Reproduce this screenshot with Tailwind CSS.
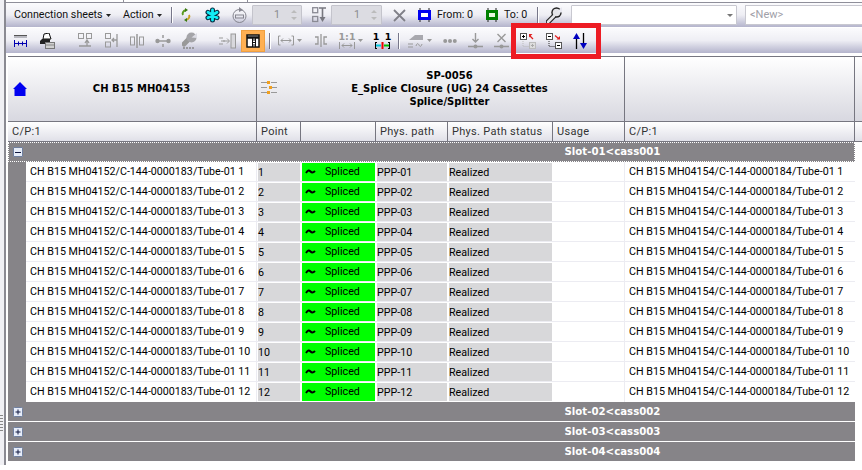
<!DOCTYPE html>
<html>
<head>
<meta charset="utf-8">
<script src="https://cdn.jsdelivr.net/npm/@tailwindcss/browser@4"></script>
</head>
<body class="m-0 bg-white">
<div class="relative flex w-[862px] h-[470px] overflow-hidden bg-white text-[10.700px] leading-[14px] text-black font-['Roboto','Noto_Sans',sans-serif]">
  <!-- window rail -->
  <div class="w-[6px] h-[465px] shrink-0 bg-[#f0f0f4] border-r-2 border-[#8a8a92]">
    <div class="mt-[415px] h-[18px] w-[3px] bg-[repeating-linear-gradient(#888_0_1px,transparent_1px_3px)]"></div>
  </div>

  <div class="flex-1 min-w-0 flex flex-col">
    <!-- top strip -->
    <div class="h-[3px] shrink-0 flex border-b border-[#8f8f9a] bg-white">
      <div class="w-[118px] border-r border-[#8f8f9a]"></div>
      <div class="w-[124px] border-r border-[#8f8f9a]"></div>
    </div>

    <!-- toolbar 1 -->
    <div class="h-[24px] shrink-0 flex items-center bg-gradient-to-b from-[#fbfbfd] via-[#eeeef4] to-[#b4b4cc] text-[10.700px] text-[#111]">
      <span class="ml-[8px] w-[88px] whitespace-nowrap">Connection sheets</span>
      <svg class="ml-[4px] w-[5px] h-[3px]" viewBox="0 0 5 3"><path d="M0 0h5L2.500 3z" fill="#222"/></svg>
      <span class="ml-[12px] w-[29px] whitespace-nowrap">Action</span>
      <svg class="ml-[5px] w-[5px] h-[3px]" viewBox="0 0 5 3"><path d="M0 0h5L2.500 3z" fill="#222"/></svg>
      <div class="ml-[9px] w-[2px] h-[16px] bg-[#77778a] border-r border-white"></div>
      <!-- refresh -->
      <svg class="ml-[8px] w-[10px] h-[14px]" viewBox="0 0 10 14"><path d="M5 2C2 3 1 5 2 7" fill="none" stroke="#5a9a20" stroke-width="2"/><path d="M4 0l3 2-3 2z" fill="#3a7a10"/><path d="M5 12c3-1 4-3 3-5" fill="none" stroke="#c8a020" stroke-width="2"/><path d="M6 14l-3-2 3-2z" fill="#3a7a10"/></svg>
      <!-- snowflake -->
      <svg class="ml-[14px] w-[15px] h-[16px]" viewBox="0 0 15 16"><g stroke="#062a40" stroke-width="5" stroke-linecap="round"><path d="M7.500 3v10M3 5.300l9 5.400M12 5.300l-9 5.400"/></g><g stroke="#12ecf4" stroke-width="2.800" stroke-linecap="round"><path d="M7.500 3v10M3 5.300l9 5.400M12 5.300l-9 5.400"/></g></svg>
      <!-- disabled circular -->
      <svg class="ml-[12px] w-[15px] h-[18px]" viewBox="0 0 15 18"><circle cx="7.500" cy="10" r="6.500" fill="none" stroke="#85858f"/><rect x="3.500" y="9" width="8" height="3" fill="none" stroke="#85858f"/><path d="M7 1l4 3-4 2z" fill="#85858f"/></svg>
      <!-- spinner -->
      <div class="ml-[5px] w-[50px] h-[20px] flex items-center justify-end bg-[#dcdce2] border border-[#c4c4cc] text-[#8a8a90] rounded-[1px]">
        <span class="mr-[10px]">1</span>
        <svg class="mr-[3px] w-[8px] h-[14px]" viewBox="0 0 8 14"><path d="M1 5l3-3 3 3zM1 9l3 3 3-3z" fill="#bbb"/></svg>
      </div>
      <!-- disabled stack -->
      <svg class="ml-[10px] w-[14px] h-[16px]" viewBox="0 0 14 16"><g fill="none" stroke="#8a8a94" stroke-width="1.300"><rect x=".7" y=".7" width="5" height="5"/><rect x=".7" y="9.500" width="5" height="5"/></g><path d="M7 1h7M10.500 1v10" stroke="#77777f" stroke-width="1.600"/><path d="M7.500 10h6l-3 5z" fill="#77777f"/></svg>
      <div class="ml-[5px] w-[51px] h-[20px] flex items-center justify-end bg-[#dcdce2] border border-[#c4c4cc] text-[#8a8a90] rounded-[1px]">
        <span class="mr-[10px]">1</span>
        <svg class="mr-[3px] w-[8px] h-[14px]" viewBox="0 0 8 14"><path d="M1 5l3-3 3 3zM1 9l3 3 3-3z" fill="#bbb"/></svg>
      </div>
      <!-- X -->
      <svg class="ml-[11px] w-[13px] h-[13px]" viewBox="0 0 13 13"><path d="M1 1l11 11M12 1L1 12" stroke="#808088" stroke-width="1.800"/></svg>
      <!-- from -->
      <svg class="ml-[12px] w-[13px] h-[14px]" viewBox="0 0 13 14"><rect x="0" y="2" width="13" height="10" fill="#0000f0"/><rect x="3" y="5" width="7" height="4" fill="#fff"/><path d="M2 0v2M11 0v2M2 12v2M11 12v2" stroke="#222"/></svg>
      <span class="ml-[6px] w-[36px] whitespace-nowrap">From: 0</span>
      <svg class="ml-[13px] w-[12px] h-[14px]" viewBox="0 0 12 14"><rect x="0" y="2" width="12" height="10" fill="#008000"/><rect x="3" y="5" width="6" height="4" fill="#e8f8e0"/><path d="M2 0v2M10 0v2M2 12v2M10 12v2" stroke="#222"/></svg>
      <span class="ml-[6px] w-[24px] whitespace-nowrap">To: 0</span>
      <div class="ml-[9px] w-[2px] h-[16px] bg-[#77778a] border-r border-white"></div>
      <!-- wrench -->
      <svg class="ml-[7px] w-[16px] h-[17px]" viewBox="0 0 16 17"><path d="M2 15l6-6" stroke="#222" stroke-width="5" stroke-linecap="round"/><circle cx="10.500" cy="5.500" r="5.200" fill="#222"/><path d="M2 15l6-6" stroke="#e4e4e8" stroke-width="2.600" stroke-linecap="round"/><circle cx="10.500" cy="5.500" r="3.800" fill="#e4e4e8"/><path d="M10.500 5.500L16 0v5.500z" fill="#e8e8f0"/></svg>
      <!-- combo -->
      <div class="ml-[9px] w-[166px] h-[20px] flex items-center justify-end bg-white border border-[#c8c8d0] rounded-[1px]">
        <svg class="mr-[3px] w-[6px] h-[3px]" viewBox="0 0 6 3"><path d="M0 0h6L3 3z" fill="#777"/></svg>
      </div>
      <div class="ml-[8px] flex-1 h-[20px] flex items-center bg-white border border-r-0 border-[#c8c8d0] pl-[4px] text-[#a0a0a8] text-[11px]">&lt;New&gt;</div>
    </div>

    <!-- toolbar 2 -->
    <div class="h-[26px] shrink-0 flex items-center border-t border-white bg-gradient-to-b from-[#fbfbfd] via-[#eeeef4] to-[#b4b4cc]">
      <svg class="ml-[8px] w-[13px] h-[12px]" viewBox="0 0 13 12"><rect y="0" width="13" height="3" fill="#b8b8c0"/><path d="M0 .5h13" stroke="#555"/><path d="M.5 5v7M12.500 5v7M1 8.500h11M4.500 6.500v4M8.500 6.500v4" stroke="#0000b0"/></svg>
      <svg class="ml-[12px] w-[16px] h-[16px]" viewBox="0 0 16 16"><path d="M5 1l5-1 2 6H4z" fill="#fff" stroke="#111"/><path d="M1 8l2-2h8v5H1z" fill="#222"/><rect x="6.500" y="9.500" width="9" height="6" fill="#d0d0d0" stroke="#777"/><path d="M7 12h8" stroke="#888"/></svg>
      <svg class="ml-[23px] w-[15px] h-[15px]" viewBox="0 0 15 15"><g fill="none" stroke="#999"><rect x=".5" y=".5" width="5" height="5"/><rect x="8.500" y=".5" width="5" height="5"/></g><path d="M1 13h12M9 13V8M7 10l2-3 2 3" fill="none" stroke="#999" stroke-width="1.300"/></svg>
      <svg class="ml-[12px] w-[13px] h-[15px]" viewBox="0 0 13 15"><g fill="none" stroke="#999"><rect x=".5" y=".5" width="5" height="5"/><rect x=".5" y="9" width="5" height="5"/></g><path d="M12 1v13M12 7H7M9 5L7 7l2 2" fill="none" stroke="#999" stroke-width="1.300"/></svg>
      <svg class="ml-[12px] w-[14px] h-[14px]" viewBox="0 0 14 14"><g fill="none" stroke="#999"><rect x=".5" y="3" width="4" height="8"/><rect x="9.500" y="3" width="4" height="8"/></g><path d="M7 0v14" stroke="#999" stroke-width="1.500"/></svg>
      <svg class="ml-[11px] w-[16px] h-[12px]" viewBox="0 0 16 12"><circle cx="2.500" cy="6" r="2.200" fill="#999"/><circle cx="13.500" cy="6" r="2.200" fill="#999"/><path d="M8 0v3M8 9v3M4 6h8" stroke="#999" stroke-width="1.500"/></svg>
      <svg class="ml-[11px] w-[15px] h-[17px]" viewBox="0 0 15 17"><path d="M2 12l4-4" stroke="#999" stroke-width="5" stroke-linecap="round"/><circle cx="9.500" cy="5.500" r="5" fill="#a4a4a8"/><path d="M9.500 5.500L15 1v5z" fill="#dcdce4"/><path d="M1 16h12" stroke="#888" stroke-width="1.500" stroke-dasharray="2 1"/></svg>
      <svg class="ml-[22px] w-[17px] h-[16px]" viewBox="0 0 17 16"><path d="M0 5h4M2 8h4M0 11h4" stroke="#999"/><path d="M4 8h6M8 5.500L10.500 8 8 10.500" fill="none" stroke="#999"/><rect x="12" y="1" width="4.500" height="14" fill="#d8d8dc" stroke="#999"/></svg>
      <!-- active -->
      <div class="ml-[5px] w-[24px] h-[22px] flex items-center justify-center bg-[#ffb053] border border-[#f0a040]">
        <svg class="w-[14px] h-[14px]" viewBox="0 0 14 14"><rect x="1" y="1" width="12" height="12" fill="#fff" stroke="#111" stroke-width="1.500"/><path d="M1 3.500h12" stroke="#111" stroke-width="2.500"/><path d="M6.500 3v10M9.500 3v10" stroke="#111"/><path d="M7 6h2M7 8.500h2M7 11h2" stroke="#111"/></svg>
      </div>
      <div class="ml-[4px] w-[2px] h-[16px] bg-[#77778a] border-r border-white"></div>
      <svg class="ml-[7px] w-[16px] h-[11px]" viewBox="0 0 16 11"><path d="M.5 1v9M15.500 1v9M.5 1h2M.5 10h2M15.500 1h-2M15.500 10h-2M3 5.500h10M5 3.500l-2 2 2 2M11 3.500l2 2-2 2" fill="none" stroke="#999"/></svg>
      <svg class="ml-[3px] w-[5px] h-[3px]" viewBox="0 0 5 3"><path d="M0 0h5L2.500 3z" fill="#999"/></svg>
      <svg class="ml-[12px] w-[14px] h-[13px]" viewBox="0 0 14 13"><path d="M7 0v13M1 3h3v7H1M13 3h-3v7h3" fill="none" stroke="#999" stroke-width="1.300"/></svg>
      <div class="ml-[11px] flex flex-col items-center w-[16px]">
        <span class="text-[9.500px] leading-[9px] font-bold text-[#999] whitespace-nowrap font-['DejaVu_Sans',sans-serif]">1:1</span>
        <svg class="mt-[1px] w-[16px] h-[7px]" viewBox="0 0 16 7"><path d="M.5 0v7M15.500 0v7M3 3.500h10M5 1.500l-2 2 2 2M11 1.500l2 2-2 2" fill="none" stroke="#999"/></svg>
      </div>
      <svg class="ml-[3px] w-[5px] h-[3px]" viewBox="0 0 5 3"><path d="M0 0h5L2.500 3z" fill="#999"/></svg>
      <div class="ml-[12px] flex flex-col items-center w-[15px]">
        <span class="text-[9.500px] leading-[9px] font-bold text-black whitespace-nowrap tracking-[1px] font-['DejaVu_Sans',sans-serif]">1 1</span>
        <svg class="mt-[1px] w-[15px] h-[7px]" viewBox="0 0 15 7"><path d="M.5 0v7M14.500 0v7M0 .5h2M0 6.500h2M13 .5h2M13 6.500h2" stroke="#000"/><path d="M1 3.500h5" stroke="#00c8e0" stroke-width="2"/><path d="M9 3.500h5" stroke="#00c000" stroke-width="2"/><path d="M7.500 0v7" stroke="#f00000" stroke-width="2"/></svg>
      </div>
      <div class="ml-[8px] w-[2px] h-[16px] bg-[#77778a] border-r border-white"></div>
      <svg class="ml-[7px] w-[16px] h-[15px]" viewBox="0 0 16 15"><path d="M2 7l6-5h8v5z" fill="#a8a8ae"/><path d="M1 11h5M1 14h5M9 13c1-3 2-3 3-1s2 2 3-1" fill="none" stroke="#999"/></svg>
      <svg class="ml-[4px] w-[5px] h-[3px]" viewBox="0 0 5 3"><path d="M0 0h5L2.500 3z" fill="#999"/></svg>
      <svg class="ml-[11px] w-[14px] h-[6px]" viewBox="0 0 14 6"><circle cx="2.200" cy="3" r="2" fill="#999"/><circle cx="11.800" cy="3" r="2" fill="#999"/><circle cx="7" cy="3" r="2" fill="#999"/></svg>
      <svg class="ml-[11px] w-[15px] h-[16px]" viewBox="0 0 15 16"><path d="M7.500 0v9M4.500 6l3 3 3-3M0 13.500h15" fill="none" stroke="#999" stroke-width="1.400"/><circle cx="7.500" cy="13.500" r="2" fill="#999"/></svg>
      <svg class="ml-[11px] w-[15px] h-[16px]" viewBox="0 0 15 16"><path d="M3.500 1l8 8M11.500 1l-8 8M0 13.500h15" fill="none" stroke="#999" stroke-width="1.400"/><circle cx="7.500" cy="13.500" r="2" fill="#999"/></svg>
      <!-- expand -->
      <svg class="ml-[11px] w-[16px] h-[16px]" viewBox="0 0 16 16"><rect x=".5" y=".5" width="6" height="6" fill="#fff" stroke="#555"/><path d="M2 3.500h3M3.500 2v3" stroke="#000"/><path d="M13 6L9.500 2.500" stroke="#e02020" stroke-width="1.200"/><path d="M9 1h3.500L9 4.500z" fill="#e02020"/><path d="M3 8v5.500h6" fill="none" stroke="#bbb" stroke-dasharray="1 1"/><rect x="9.500" y="9.500" width="6" height="6" fill="#ddd" stroke="#bbb"/><path d="M11 12.500h3M12.500 11v3" stroke="#aaa"/></svg>
      <svg class="ml-[10px] w-[16px] h-[16px]" viewBox="0 0 16 16"><rect x=".5" y=".5" width="6" height="6" fill="#fff" stroke="#555"/><path d="M2 3.500h3" stroke="#000"/><path d="M9 2.500l3.500 3" stroke="#e02020" stroke-width="1.200"/><path d="M14 3v3.500h-3.500z" fill="#e02020"/><path d="M3 8v5.500h6" fill="none" stroke="#333" stroke-dasharray="1 1"/><rect x="9.500" y="9.500" width="6" height="6" fill="#fff" stroke="#555"/><path d="M11 12.500h3" stroke="#000"/></svg>
      <svg class="ml-[11px] w-[14px] h-[16px]" viewBox="0 0 14 16"><path d="M3.500 16V4" stroke="#000" stroke-width="1.300"/><path d="M3.500 0L7 6H0z" fill="#0000c0"/><path d="M10.500 0v12" stroke="#000" stroke-width="1.300"/><path d="M10.500 16L14 10H7z" fill="#0000c0"/></svg>
    </div>

    <!-- gap -->
    <div class="h-[3px] shrink-0 bg-white"></div>

    <!-- table -->
    <div class="ml-[2px] w-[854px] shrink-0 border-t border-[#767680]">
      <!-- machine header -->
      <div class="h-[65px] grid grid-cols-[249px_368px_230px_7px] border-b border-[#767680] bg-gradient-to-b from-white to-[#d8d8e0] font-bold font-['DejaVu_Sans',sans-serif] text-[10px] leading-[13px]">
        <div class="flex items-center border-r border-[#767680] pl-[5px] pb-[2px]">
          <svg class="w-[14px] h-[14px] shrink-0 mt-[2px]" viewBox="0 0 14 14"><path d="M7 0l7 7h-1.500v7h-11V7H0z" fill="#0000f0"/></svg>
          <span class="flex-1 text-center">CH B15 MH04153</span>
        </div>
        <div class="relative flex items-center justify-center text-center border-r border-[#767680] pl-[18px] pb-[2px]">
          <svg class="absolute left-[4px] top-[24px] w-[16px] h-[14px]" viewBox="0 0 16 14"><path d="M0 1.500h6M10 1.500h6M0 6.500h6M10 6.500h6M0 11.500h6M10 11.500h6" stroke="#999"/><path d="M6 0h3v3H6zM8 5h3v3H8zM6 10h3v3H6z" fill="#f0a020"/></svg>
          <div>SP-0056<br>E_Splice Closure (UG) 24 Cassettes<br>Splice/Splitter</div>
        </div>
        <div class="border-r border-[#767680]"></div>
        <div></div>
      </div>
      <!-- column heads -->
      <div class="h-[20px] grid grid-cols-[249px_44px_75px_72px_105px_72px_230px_7px] items-stretch border-b border-[#767680] bg-gradient-to-b from-white to-[#e0e0e8] text-[#333] text-[11px] tracking-[0.3px]">
        <div class="pl-[4px] leading-[19px] border-r border-[#767680]">C/P:1</div>
        <div class="pl-[4px] leading-[19px] border-r border-[#767680]">Point</div>
        <div class="border-r border-[#767680]"></div>
        <div class="pl-[4px] leading-[19px] border-r border-[#767680]">Phys. path</div>
        <div class="pl-[4px] leading-[19px] border-r border-[#767680]">Phys. Path status</div>
        <div class="pl-[4px] leading-[19px] border-r border-[#767680]">Usage</div>
        <div class="pl-[4px] leading-[19px] border-r border-[#767680]">C/P:1</div>
        <div></div>
      </div>
      <!-- group 1 -->
      <div class="relative w-[847px] h-[20px] flex items-center justify-center pl-[362px] bg-[#868488] border border-dotted border-white text-white font-bold font-['DejaVu_Sans',sans-serif] text-[10.200px]">
        <div class="absolute left-[4px] top-[4px] w-[10px] h-[10px] flex items-center justify-center bg-[#e6ecf8] border border-[#7080a0] rounded-[1px]"><div class="w-[6px] h-[1px] bg-[#101840]"></div></div>
        <span>Slot-01&lt;cass001</span>
      </div>
      <div class="flex w-[847px]">
        <div class="w-[18px] shrink-0 bg-[#868488]"></div>
        <div class="flex-1">
          <div class="h-[20px] grid grid-cols-[231px_44px_75px_72px_105px_72px_230px] border-b border-[#ececf2]"><div class="pl-[4px] leading-[20px] border-r border-[#ececf2] whitespace-nowrap">CH B15 MH04152/C-144-0000183/Tube-01 1</div><div class="m-[1px] bg-[#d8d8da] pt-[3px]">1</div><div class="m-[1px] bg-[#00ff00] flex items-center"><svg class="ml-[3px] w-[11px] h-[6px]" viewBox="0 0 11 6"><path d="M1 4c2-3 3-3 4.500-1.500S8 4 10 2" fill="none" stroke="#000" stroke-width="2"/></svg><span class="ml-[9px]">Spliced</span></div><div class="m-[1px] bg-[#d8d8da] pt-[3px]">PPP-01</div><div class="m-[1px] bg-[#d8d8da] pt-[3px]">Realized</div><div class="border-r border-[#ececf2]"></div><div class="pl-[4px] leading-[20px] whitespace-nowrap">CH B15 MH04154/C-144-0000184/Tube-01 1</div></div>
          <div class="h-[20px] grid grid-cols-[231px_44px_75px_72px_105px_72px_230px] border-b border-[#ececf2]"><div class="pl-[4px] leading-[20px] border-r border-[#ececf2] whitespace-nowrap">CH B15 MH04152/C-144-0000183/Tube-01 2</div><div class="m-[1px] bg-[#d8d8da] pt-[3px]">2</div><div class="m-[1px] bg-[#00ff00] flex items-center"><svg class="ml-[3px] w-[11px] h-[6px]" viewBox="0 0 11 6"><path d="M1 4c2-3 3-3 4.500-1.500S8 4 10 2" fill="none" stroke="#000" stroke-width="2"/></svg><span class="ml-[9px]">Spliced</span></div><div class="m-[1px] bg-[#d8d8da] pt-[3px]">PPP-02</div><div class="m-[1px] bg-[#d8d8da] pt-[3px]">Realized</div><div class="border-r border-[#ececf2]"></div><div class="pl-[4px] leading-[20px] whitespace-nowrap">CH B15 MH04154/C-144-0000184/Tube-01 2</div></div>
          <div class="h-[20px] grid grid-cols-[231px_44px_75px_72px_105px_72px_230px] border-b border-[#ececf2]"><div class="pl-[4px] leading-[20px] border-r border-[#ececf2] whitespace-nowrap">CH B15 MH04152/C-144-0000183/Tube-01 3</div><div class="m-[1px] bg-[#d8d8da] pt-[3px]">3</div><div class="m-[1px] bg-[#00ff00] flex items-center"><svg class="ml-[3px] w-[11px] h-[6px]" viewBox="0 0 11 6"><path d="M1 4c2-3 3-3 4.500-1.500S8 4 10 2" fill="none" stroke="#000" stroke-width="2"/></svg><span class="ml-[9px]">Spliced</span></div><div class="m-[1px] bg-[#d8d8da] pt-[3px]">PPP-03</div><div class="m-[1px] bg-[#d8d8da] pt-[3px]">Realized</div><div class="border-r border-[#ececf2]"></div><div class="pl-[4px] leading-[20px] whitespace-nowrap">CH B15 MH04154/C-144-0000184/Tube-01 3</div></div>
          <div class="h-[20px] grid grid-cols-[231px_44px_75px_72px_105px_72px_230px] border-b border-[#ececf2]"><div class="pl-[4px] leading-[20px] border-r border-[#ececf2] whitespace-nowrap">CH B15 MH04152/C-144-0000183/Tube-01 4</div><div class="m-[1px] bg-[#d8d8da] pt-[3px]">4</div><div class="m-[1px] bg-[#00ff00] flex items-center"><svg class="ml-[3px] w-[11px] h-[6px]" viewBox="0 0 11 6"><path d="M1 4c2-3 3-3 4.500-1.500S8 4 10 2" fill="none" stroke="#000" stroke-width="2"/></svg><span class="ml-[9px]">Spliced</span></div><div class="m-[1px] bg-[#d8d8da] pt-[3px]">PPP-04</div><div class="m-[1px] bg-[#d8d8da] pt-[3px]">Realized</div><div class="border-r border-[#ececf2]"></div><div class="pl-[4px] leading-[20px] whitespace-nowrap">CH B15 MH04154/C-144-0000184/Tube-01 4</div></div>
          <div class="h-[20px] grid grid-cols-[231px_44px_75px_72px_105px_72px_230px] border-b border-[#ececf2]"><div class="pl-[4px] leading-[20px] border-r border-[#ececf2] whitespace-nowrap">CH B15 MH04152/C-144-0000183/Tube-01 5</div><div class="m-[1px] bg-[#d8d8da] pt-[3px]">5</div><div class="m-[1px] bg-[#00ff00] flex items-center"><svg class="ml-[3px] w-[11px] h-[6px]" viewBox="0 0 11 6"><path d="M1 4c2-3 3-3 4.500-1.500S8 4 10 2" fill="none" stroke="#000" stroke-width="2"/></svg><span class="ml-[9px]">Spliced</span></div><div class="m-[1px] bg-[#d8d8da] pt-[3px]">PPP-05</div><div class="m-[1px] bg-[#d8d8da] pt-[3px]">Realized</div><div class="border-r border-[#ececf2]"></div><div class="pl-[4px] leading-[20px] whitespace-nowrap">CH B15 MH04154/C-144-0000184/Tube-01 5</div></div>
          <div class="h-[20px] grid grid-cols-[231px_44px_75px_72px_105px_72px_230px] border-b border-[#ececf2]"><div class="pl-[4px] leading-[20px] border-r border-[#ececf2] whitespace-nowrap">CH B15 MH04152/C-144-0000183/Tube-01 6</div><div class="m-[1px] bg-[#d8d8da] pt-[3px]">6</div><div class="m-[1px] bg-[#00ff00] flex items-center"><svg class="ml-[3px] w-[11px] h-[6px]" viewBox="0 0 11 6"><path d="M1 4c2-3 3-3 4.500-1.500S8 4 10 2" fill="none" stroke="#000" stroke-width="2"/></svg><span class="ml-[9px]">Spliced</span></div><div class="m-[1px] bg-[#d8d8da] pt-[3px]">PPP-06</div><div class="m-[1px] bg-[#d8d8da] pt-[3px]">Realized</div><div class="border-r border-[#ececf2]"></div><div class="pl-[4px] leading-[20px] whitespace-nowrap">CH B15 MH04154/C-144-0000184/Tube-01 6</div></div>
          <div class="h-[20px] grid grid-cols-[231px_44px_75px_72px_105px_72px_230px] border-b border-[#ececf2]"><div class="pl-[4px] leading-[20px] border-r border-[#ececf2] whitespace-nowrap">CH B15 MH04152/C-144-0000183/Tube-01 7</div><div class="m-[1px] bg-[#d8d8da] pt-[3px]">7</div><div class="m-[1px] bg-[#00ff00] flex items-center"><svg class="ml-[3px] w-[11px] h-[6px]" viewBox="0 0 11 6"><path d="M1 4c2-3 3-3 4.500-1.500S8 4 10 2" fill="none" stroke="#000" stroke-width="2"/></svg><span class="ml-[9px]">Spliced</span></div><div class="m-[1px] bg-[#d8d8da] pt-[3px]">PPP-07</div><div class="m-[1px] bg-[#d8d8da] pt-[3px]">Realized</div><div class="border-r border-[#ececf2]"></div><div class="pl-[4px] leading-[20px] whitespace-nowrap">CH B15 MH04154/C-144-0000184/Tube-01 7</div></div>
          <div class="h-[20px] grid grid-cols-[231px_44px_75px_72px_105px_72px_230px] border-b border-[#ececf2]"><div class="pl-[4px] leading-[20px] border-r border-[#ececf2] whitespace-nowrap">CH B15 MH04152/C-144-0000183/Tube-01 8</div><div class="m-[1px] bg-[#d8d8da] pt-[3px]">8</div><div class="m-[1px] bg-[#00ff00] flex items-center"><svg class="ml-[3px] w-[11px] h-[6px]" viewBox="0 0 11 6"><path d="M1 4c2-3 3-3 4.500-1.500S8 4 10 2" fill="none" stroke="#000" stroke-width="2"/></svg><span class="ml-[9px]">Spliced</span></div><div class="m-[1px] bg-[#d8d8da] pt-[3px]">PPP-08</div><div class="m-[1px] bg-[#d8d8da] pt-[3px]">Realized</div><div class="border-r border-[#ececf2]"></div><div class="pl-[4px] leading-[20px] whitespace-nowrap">CH B15 MH04154/C-144-0000184/Tube-01 8</div></div>
          <div class="h-[20px] grid grid-cols-[231px_44px_75px_72px_105px_72px_230px] border-b border-[#ececf2]"><div class="pl-[4px] leading-[20px] border-r border-[#ececf2] whitespace-nowrap">CH B15 MH04152/C-144-0000183/Tube-01 9</div><div class="m-[1px] bg-[#d8d8da] pt-[3px]">9</div><div class="m-[1px] bg-[#00ff00] flex items-center"><svg class="ml-[3px] w-[11px] h-[6px]" viewBox="0 0 11 6"><path d="M1 4c2-3 3-3 4.500-1.500S8 4 10 2" fill="none" stroke="#000" stroke-width="2"/></svg><span class="ml-[9px]">Spliced</span></div><div class="m-[1px] bg-[#d8d8da] pt-[3px]">PPP-09</div><div class="m-[1px] bg-[#d8d8da] pt-[3px]">Realized</div><div class="border-r border-[#ececf2]"></div><div class="pl-[4px] leading-[20px] whitespace-nowrap">CH B15 MH04154/C-144-0000184/Tube-01 9</div></div>
          <div class="h-[20px] grid grid-cols-[231px_44px_75px_72px_105px_72px_230px] border-b border-[#ececf2]"><div class="pl-[4px] leading-[20px] border-r border-[#ececf2] whitespace-nowrap">CH B15 MH04152/C-144-0000183/Tube-01 10</div><div class="m-[1px] bg-[#d8d8da] pt-[3px]">10</div><div class="m-[1px] bg-[#00ff00] flex items-center"><svg class="ml-[3px] w-[11px] h-[6px]" viewBox="0 0 11 6"><path d="M1 4c2-3 3-3 4.500-1.500S8 4 10 2" fill="none" stroke="#000" stroke-width="2"/></svg><span class="ml-[9px]">Spliced</span></div><div class="m-[1px] bg-[#d8d8da] pt-[3px]">PPP-10</div><div class="m-[1px] bg-[#d8d8da] pt-[3px]">Realized</div><div class="border-r border-[#ececf2]"></div><div class="pl-[4px] leading-[20px] whitespace-nowrap">CH B15 MH04154/C-144-0000184/Tube-01 10</div></div>
          <div class="h-[20px] grid grid-cols-[231px_44px_75px_72px_105px_72px_230px] border-b border-[#ececf2]"><div class="pl-[4px] leading-[20px] border-r border-[#ececf2] whitespace-nowrap">CH B15 MH04152/C-144-0000183/Tube-01 11</div><div class="m-[1px] bg-[#d8d8da] pt-[3px]">11</div><div class="m-[1px] bg-[#00ff00] flex items-center"><svg class="ml-[3px] w-[11px] h-[6px]" viewBox="0 0 11 6"><path d="M1 4c2-3 3-3 4.500-1.500S8 4 10 2" fill="none" stroke="#000" stroke-width="2"/></svg><span class="ml-[9px]">Spliced</span></div><div class="m-[1px] bg-[#d8d8da] pt-[3px]">PPP-11</div><div class="m-[1px] bg-[#d8d8da] pt-[3px]">Realized</div><div class="border-r border-[#ececf2]"></div><div class="pl-[4px] leading-[20px] whitespace-nowrap">CH B15 MH04154/C-144-0000184/Tube-01 11</div></div>
          <div class="h-[20px] grid grid-cols-[231px_44px_75px_72px_105px_72px_230px]"><div class="pl-[4px] leading-[20px] border-r border-[#ececf2] whitespace-nowrap">CH B15 MH04152/C-144-0000183/Tube-01 12</div><div class="m-[1px] bg-[#d8d8da] pt-[3px]">12</div><div class="m-[1px] bg-[#00ff00] flex items-center"><svg class="ml-[3px] w-[11px] h-[6px]" viewBox="0 0 11 6"><path d="M1 4c2-3 3-3 4.500-1.500S8 4 10 2" fill="none" stroke="#000" stroke-width="2"/></svg><span class="ml-[9px]">Spliced</span></div><div class="m-[1px] bg-[#d8d8da] pt-[3px]">PPP-12</div><div class="m-[1px] bg-[#d8d8da] pt-[3px]">Realized</div><div class="border-r border-[#ececf2]"></div><div class="pl-[4px] leading-[20px] whitespace-nowrap">CH B15 MH04154/C-144-0000184/Tube-01 12</div></div>
        </div>
      </div>
      <!-- collapsed groups -->
      <div class="relative w-[847px] h-[20px] flex items-center justify-center pl-[362px] bg-[#868488] border-b border-white text-white font-bold font-['DejaVu_Sans',sans-serif] text-[10.200px]">
        <svg class="absolute left-[5px] top-[5px] w-[10px] h-[10px]" viewBox="0 0 10 10"><rect x=".5" y=".5" width="9" height="9" rx="1" fill="#e6ecf8" stroke="#7080a0"/><path d="M2.500 5h5M5 2.500v5" stroke="#101840"/></svg>
        <span>Slot-02&lt;cass002</span>
      </div>
      <div class="relative w-[847px] h-[20px] flex items-center justify-center pl-[362px] bg-[#868488] border-b border-white text-white font-bold font-['DejaVu_Sans',sans-serif] text-[10.200px]">
        <svg class="absolute left-[5px] top-[5px] w-[10px] h-[10px]" viewBox="0 0 10 10"><rect x=".5" y=".5" width="9" height="9" rx="1" fill="#e6ecf8" stroke="#7080a0"/><path d="M2.500 5h5M5 2.500v5" stroke="#101840"/></svg>
        <span>Slot-03&lt;cass003</span>
      </div>
      <div class="relative w-[847px] h-[19px] flex items-center justify-center pl-[362px] bg-[#868488] text-white font-bold font-['DejaVu_Sans',sans-serif] text-[10.200px]">
        <svg class="absolute left-[5px] top-[5px] w-[10px] h-[10px]" viewBox="0 0 10 10"><rect x=".5" y=".5" width="9" height="9" rx="1" fill="#e6ecf8" stroke="#7080a0"/><path d="M2.500 5h5M5 2.500v5" stroke="#101840"/></svg>
        <span>Slot-04&lt;cass004</span>
      </div>
    </div>
  </div>

  <!-- annotation: red rectangle -->
  <div class="absolute left-[511px] top-[23px] w-[90px] h-[36px] border-[5px] border-[#ed1c24]"></div>
</div>
</body>
</html>
